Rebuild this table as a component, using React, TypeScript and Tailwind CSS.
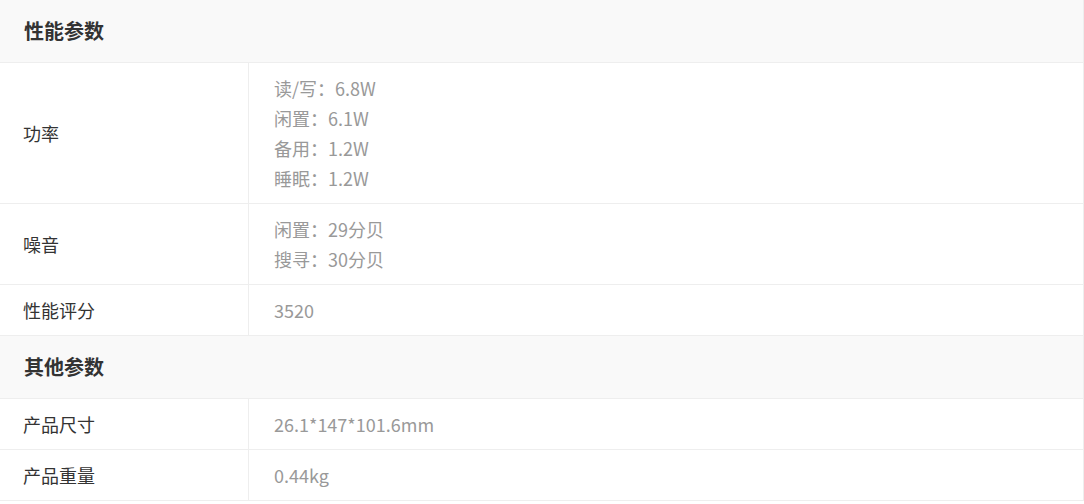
import React from "react";

interface SpecRow {
  label: string;
  values: string[];
}

interface SpecGroup {
  title: string;
  rows: SpecRow[];
}

const groups: SpecGroup[] = [
  {
    title: "性能参数",
    rows: [
      { label: "功率", values: ["读/写：6.8W", "闲置：6.1W", "备用：1.2W", "睡眠：1.2W"] },
      { label: "噪音", values: ["闲置：29分贝", "搜寻：30分贝"] },
      { label: "性能评分", values: ["3520"] },
    ],
  },
  {
    title: "其他参数",
    rows: [
      { label: "产品尺寸", values: ["26.1*147*101.6mm"] },
      { label: "产品重量", values: ["0.44kg"] },
    ],
  },
];

export default function App() {
  return (
    <div className="w-[1084px] bg-white font-['Noto_Sans_CJK_SC','Noto_Sans',sans-serif]">
      <div className="border-r border-[#eeeeee]">
        {groups.map((group) => (
          <div key={group.title}>
            <div className="flex h-[63px] items-center border-b border-[#eeeeee] bg-[#f9f9f9] px-6 text-xl font-bold text-[#333333]">
              {group.title}
            </div>
            {group.rows.map((row) => (
              <div key={row.label} className="flex border-b border-[#eeeeee]">
                <div className="flex w-[249px] shrink-0 items-center border-r border-[#eeeeee] pl-[23px] text-lg text-[#333333]">
                  {row.label}
                </div>
                <div className="flex flex-col py-2.5 pl-[25px] text-lg leading-[30px] text-[#999999]">
                  {row.values.map((value) => (
                    <p key={value}>{value}</p>
                  ))}
                </div>
              </div>
            ))}
          </div>
        ))}
      </div>
    </div>
  );
}
